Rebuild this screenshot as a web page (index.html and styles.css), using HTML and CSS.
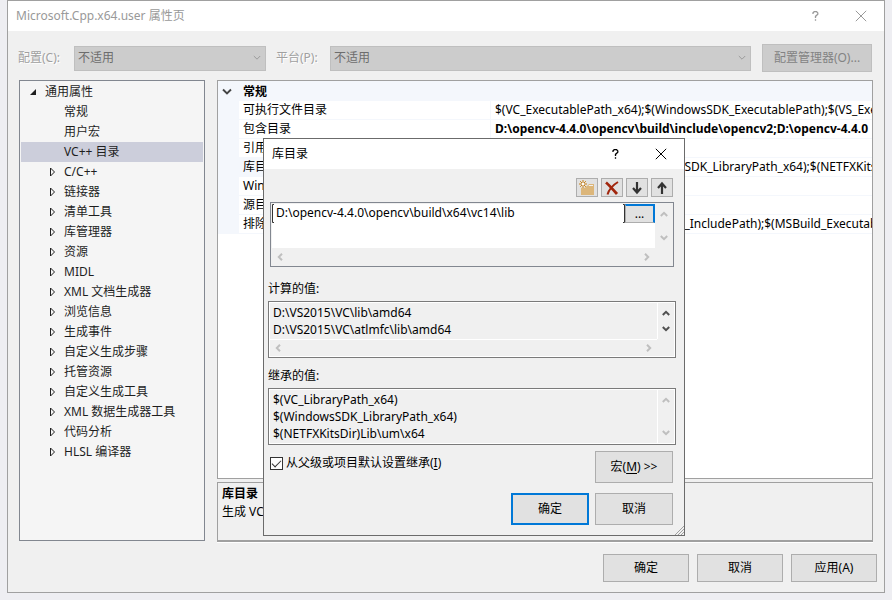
FILE: index.html
```html
<!DOCTYPE html>
<html lang="zh-CN">
<head>
<meta charset="utf-8">
<title>Microsoft.Cpp.x64.user 属性页</title>
<link rel="stylesheet" href="styles.css">
</head>
<body>
<svg class="defs" aria-hidden="true">
  <symbol id="close" viewBox="0 0 12 12"><path d="M.8.8l10.4 10.4M11.200.8L.8 11.200"/></symbol>
  <symbol id="help" viewBox="0 0 7 10"><path d="M1 3V1.800L2.200.700h2.400L5.800 1.900v1.400L3.500 5.400V7M3.500 8.300v1.400"/></symbol>
  <symbol id="up" viewBox="0 0 8 6"><path d="M.8 5L4 1.800 7.200 5"/></symbol>
  <symbol id="down" viewBox="0 0 8 6"><path d="M.8 1L4 4.200 7.200 1"/></symbol>
  <symbol id="left" viewBox="0 0 6 8"><path d="M5 .8L1.800 4 5 7.200"/></symbol>
  <symbol id="right" viewBox="0 0 6 8"><path d="M1 .8L4.200 4 1 7.200"/></symbol>
  <symbol id="twisty" viewBox="0 0 6 10"><path d="M.5 1v8L4.500 5z"/></symbol>
</svg>

<main class="window">
  <header class="titlebar inactive">
    <h1>Microsoft.Cpp.x64.user 属性页</h1>
    <button class="caption" type="button" aria-label="帮助"><svg class="q"><use href="#help"/></svg></button>
    <button class="caption" type="button" aria-label="关闭"><svg class="x"><use href="#close"/></svg></button>
  </header>

  <div class="config">
    <label for="cfg">配置(C):</label>
    <span class="combo first"><select id="cfg" disabled><option>不适用</option></select><svg class="arrow"><use href="#down"/></svg></span>
    <label for="plat">平台(P):</label>
    <span class="combo"><select id="plat" disabled><option>不适用</option></select><svg class="arrow"><use href="#down"/></svg></span>
    <button class="manager" type="button" disabled>配置管理器(O)...</button>
  </div>

  <div class="content">
    <nav class="tree">
      <div class="node root"><svg class="open" viewBox="0 0 8 8"><path d="M7 1v6H1z"/></svg>通用属性</div>
      <ul>
        <li class="node">常规</li>
        <li class="node">用户宏</li>
        <li class="node selected">VC++ 目录</li>
        <li class="node"><svg class="twisty"><use href="#twisty"/></svg>C/C++</li>
        <li class="node"><svg class="twisty"><use href="#twisty"/></svg>链接器</li>
        <li class="node"><svg class="twisty"><use href="#twisty"/></svg>清单工具</li>
        <li class="node"><svg class="twisty"><use href="#twisty"/></svg>库管理器</li>
        <li class="node"><svg class="twisty"><use href="#twisty"/></svg>资源</li>
        <li class="node"><svg class="twisty"><use href="#twisty"/></svg>MIDL</li>
        <li class="node"><svg class="twisty"><use href="#twisty"/></svg>XML 文档生成器</li>
        <li class="node"><svg class="twisty"><use href="#twisty"/></svg>浏览信息</li>
        <li class="node"><svg class="twisty"><use href="#twisty"/></svg>生成事件</li>
        <li class="node"><svg class="twisty"><use href="#twisty"/></svg>自定义生成步骤</li>
        <li class="node"><svg class="twisty"><use href="#twisty"/></svg>托管资源</li>
        <li class="node"><svg class="twisty"><use href="#twisty"/></svg>自定义生成工具</li>
        <li class="node"><svg class="twisty"><use href="#twisty"/></svg>XML 数据生成器工具</li>
        <li class="node"><svg class="twisty"><use href="#twisty"/></svg>代码分析</li>
        <li class="node"><svg class="twisty"><use href="#twisty"/></svg>HLSL 编译器</li>
      </ul>
    </nav>

    <div class="right">
      <div class="grid">
        <table>
          <colgroup><col class="c-gutter"><col class="c-name"><col></colgroup>
          <thead><tr><td class="gutter"><svg class="fold"><use href="#down"/></svg></td><th colspan="2">常规</th></tr></thead>
          <tbody>
            <tr><td class="gutter"></td><td>可执行文件目录</td><td>$(VC_ExecutablePath_x64);$(WindowsSDK_ExecutablePath);$(VS_ExecutablePath)</td></tr>
            <tr><td class="gutter"></td><td>包含目录</td><td><b>D:\opencv-4.4.0\opencv\build\include\opencv2;D:\opencv-4.4.0</b></td></tr>
            <tr><td class="gutter"></td><td>引用目录</td><td></td></tr>
            <tr class="current"><td class="gutter"></td><td>库目录</td><td>$(VC_LibraryPath_x64);$(WindowsSDK_LibraryPath_x64);$(NETFXKitsDir)</td></tr>
            <tr><td class="gutter"></td><td>WinRT 目录</td><td></td></tr>
            <tr><td class="gutter"></td><td>源目录</td><td></td></tr>
            <tr><td class="gutter"></td><td>排除目录</td><td>$(VC_IncludePath);$(WindowsSDK_IncludePath);$(MSBuild_ExecutablePath)</td></tr>
          </tbody>
        </table>
      </div>
      <div class="description"><b>库目录</b><p>生成 VC++ 项目</p></div>
    </div>
  </div>

  <footer class="actions">
    <button class="btn" type="button">确定</button>
    <button class="btn" type="button">取消</button>
    <button class="btn" type="button">应用(A)</button>
  </footer>
</main>

<section class="dialog" role="dialog" aria-labelledby="dlg-title">
  <header class="titlebar">
    <h2 id="dlg-title">库目录</h2>
    <button class="caption" type="button" aria-label="帮助"><svg class="q"><use href="#help"/></svg></button>
    <button class="caption" type="button" aria-label="关闭"><svg class="x"><use href="#close"/></svg></button>
  </header>
  <div class="body">
    <div class="toolbar">
      <button type="button" aria-label="新行"><svg viewBox="0 0 16 16"><path fill="#dcb67a" d="M2 6h6l2-2h5v11H2z"/><path fill="#f0f0f0" d="M10 5h4v1H9.500z"/><circle cx="4" cy="4" r="4" fill="#e8e4dc"/><path stroke="#c27d1a" d="M4 0v8M0 4h8M1.200 1.200l5.600 5.600M6.800 1.200L1.200 6.800"/><circle cx="4" cy="4" r="1.200" fill="#fff"/></svg></button>
      <button type="button" aria-label="删除"><svg viewBox="0 0 16 16"><path fill="none" stroke="#a1260d" stroke-width="2.800" d="M2 2.500c3 2.500 7 7 11 11.500"/><path fill="none" stroke="#a1260d" stroke-width="2" d="M14 2C9 5 5 9.500 3.500 14.500"/></svg></button>
      <button type="button" aria-label="下移"><svg viewBox="0 0 16 16"><path fill="none" stroke="#333" stroke-width="2.200" d="M8 2v10.500M4 8l4 4.500L12 8"/></svg></button>
      <button type="button" aria-label="上移"><svg viewBox="0 0 16 16"><path fill="none" stroke="#333" stroke-width="2.200" d="M8 14V3.500M4 8l4-4.500L12 8"/></svg></button>
    </div>

    <div class="pane editor">
      <div class="edit">
        <svg class="bracket" viewBox="0 0 2 19"><path d="M2 .5H.5v18H2"/></svg>
        <input type="text" aria-label="目录" value="D:\opencv-4.4.0\opencv\build\x64\vc14\lib">
        <svg class="bracket" viewBox="0 0 2 19"><path d="M0 .5h1.500v18H0"/></svg>
        <button class="browse" type="button">...</button>
      </div>
      <div class="vbar"><svg class="v"><use href="#up"/></svg><svg class="v"><use href="#down"/></svg></div>
      <div class="hbar"><svg class="h"><use href="#left"/></svg><svg class="h"><use href="#right"/></svg></div>
    </div>

    <label class="caption-label" for="eval">计算的值:</label>
    <div class="pane values">
      <textarea id="eval" rows="2" readonly>D:\VS2015\VC\lib\amd64
D:\VS2015\VC\atlmfc\lib\amd64</textarea>
      <div class="vbar enabled"><svg class="v"><use href="#up"/></svg><svg class="v"><use href="#down"/></svg></div>
      <div class="hbar"><svg class="h"><use href="#left"/></svg><svg class="h"><use href="#right"/></svg></div>
    </div>

    <label class="caption-label" for="inh">继承的值:</label>
    <div class="pane values">
      <textarea id="inh" rows="3" readonly>$(VC_LibraryPath_x64)
$(WindowsSDK_LibraryPath_x64)
$(NETFXKitsDir)Lib\um\x64</textarea>
      <div class="vbar"><svg class="v"><use href="#up"/></svg><svg class="v"><use href="#down"/></svg></div>
    </div>

    <div class="inherit">
      <label class="check"><input type="checkbox" checked><span>从父级或项目默认设置继承(<u>I</u>)</span></label>
      <button class="btn" type="button"><span>宏(<u>M</u>) &gt;&gt;</span></button>
    </div>
    <div class="confirm">
      <button class="btn default" type="button">确定</button>
      <button class="btn" type="button">取消</button>
    </div>
  </div>
  <svg class="grip" viewBox="0 0 9 9"><path d="M0 9L9 0M3 9l6-6M6 9l3-3"/></svg>
</section>
</body>
</html>
```
FILE: styles.css
```css
* { box-sizing: border-box; }
body {
  margin: 0;
  min-height: 100vh;
  display: flex;
  position: relative;
  background: #eeeef2;
  color: #000;
  font: 12px/18px "Noto Sans", "Noto Sans CJK SC", sans-serif;
}
button, input, select, textarea { font: inherit; color: inherit; margin: 0; border-radius: 0; }
button { padding: 0; display: flex; align-items: center; justify-content: center; }
h1, h2, p, ul { margin: 0; padding: 0; }
.defs { position: absolute; width: 0; height: 0; }
svg { fill: none; stroke: currentColor; flex: none; }

.window {
  flex: 1;
  min-width: 0;
  margin: 0 7px 7px;
  border: 1px solid #a0a0a0;
  background: #f0f0f0;
  display: flex;
  flex-direction: column;
}
.titlebar { display: flex; align-items: center; height: 30px; background: #fff; padding-left: 8px; }
.titlebar h1, .titlebar h2 { flex: 1; font-size: 12px; font-weight: 400; }
.titlebar.inactive { color: #999; }
.caption { width: 46px; height: 30px; border: 0; background: none; }
.caption .x { width: 12px; height: 12px; }
.caption .q { width: 7px; height: 10px; stroke-width: 1.300; }

.config { display: flex; align-items: center; height: 28px; margin: 13px 12px 8px 10px; }
.config label { width: 56px; color: #a0a0a0; text-shadow: 1px 1px #fff; }
.combo { display: grid; align-items: center; flex: 1; height: 25px; }
.combo.first { flex: 0 0 192px; }
.combo + label { width: 64px; padding-left: 10px; }
.combo > * { grid-area: 1 / 1; }
.combo select {
  appearance: none;
  width: 100%;
  height: 25px;
  padding: 0 3px;
  border: 1px solid #bfbfbf;
  background: #ccc;
  color: #6d6d6d;
  opacity: 1;
}
.arrow { width: 8px; height: 6px; justify-self: end; margin-right: 5px; color: #9a9a9a; }
.manager { width: 110px; height: 28px; margin-left: 11px; border: 1px solid #bfbfbf; background: #ccc; color: #838383; }

.content { flex: 1; min-height: 0; display: flex; gap: 12px; padding: 0 11px; }
.tree { width: 186px; border: 1px solid #828790; background: #f5f5f5; padding: 1px; margin-bottom: 1px; color: #1e1e1e; }
.tree ul { list-style: none; }
.node { display: flex; align-items: center; height: 20px; padding-left: 43px; }
.node.root { padding-left: 8px; gap: 8px; }
.node.selected { background: #cccedb; }
.twisty { width: 6px; height: 10px; margin: 0 8px 0 -14px; }
.open { width: 8px; height: 8px; fill: #1e1e1e; stroke: none; }

.right { flex: 1; min-width: 0; display: flex; flex-direction: column; gap: 3px; }
.grid { flex: 1; border: 1px solid #a0a0a0; background: #fff; overflow: hidden; }
table { width: 100%; table-layout: fixed; border-collapse: separate; border-spacing: 0; }
.c-gutter { width: 21px; }
.c-name { width: 252px; }
tr { height: 19px; }
thead tr { height: 20px; background: #f4f7fc; }
td, th { padding: 0 4px; line-height: 18px; white-space: nowrap; overflow: hidden; text-align: left; }
td:last-child { padding-right: 0; }
thead td, thead th { padding-top: 2px; }
tbody td { border-bottom: 1px solid #f4f7fc; }
tbody td:nth-child(2) { border-right: 1px solid #f4f7fc; }
td.gutter { background: #f4f7fc; }
.fold { display: block; width: 10px; height: 8px; stroke-width: 1.500; color: #444; }
.current td:nth-child(2) { background: #f4f7fc; }
.description { height: 60px; border: 1px solid #a0a0a0; border-bottom-width: 2px; box-shadow: 0 1px #fff; padding: 2px 4px; }

.actions { display: flex; justify-content: flex-end; gap: 8px; padding: 12px 7px 10px; }
.btn { width: 78px; height: 32px; border: 1px solid #adadad; background: #e1e1e1; }
.actions .btn { width: 86px; height: 28px; }
.btn.default { border: 2px solid #0078d7; }

.dialog { position: absolute; left: 263px; top: 138px; width: 422px; border: 1px solid #6b6b6b; background: #f0f0f0; }
.body { padding: 9px 8px 10px 4px; }
.toolbar { display: flex; justify-content: flex-end; gap: 3px; padding-right: 3px; }
.toolbar button { width: 22px; height: 19px; border: 1px solid #adadad; background: #e1e1e1; }
.toolbar svg { width: 16px; height: 16px; stroke: none; }
.pane { display: grid; grid-template-columns: 1fr 17px; grid-template-rows: 1fr auto; border: 1px solid #7a7a7a; padding: 1px; }
.editor { height: 65px; margin: 5px 2px 0; border-color: #828790; background: #f0f0f0; }
.edit { display: flex; align-items: flex-start; background: #fff; }
.edit input { flex: 1; min-width: 0; height: 18px; padding: 0 2px; border: 0; outline: 0; background: #fff; }
.bracket { width: 2px; height: 19px; color: #333; }
.browse { width: 30px; height: 19px; border: 1px solid #adadad; background: #e1e1e1; box-shadow: inset 0 0 0 1px #e1e1e1; border-top: 2px solid #0078d7; border-right: 2px solid #0078d7; }
.vbar { display: flex; flex-direction: column; align-items: center; justify-content: space-between; padding: 7px 0; color: #bfbfbf; }
.vbar svg, .hbar svg { stroke-width: 2; }
.v { width: 8px; height: 6px; }
.h { width: 6px; height: 8px; }
.enabled { color: #505050; }
.hbar { display: flex; justify-content: space-between; align-items: center; height: 17px; padding: 0 5px; color: #bfbfbf; }
.caption-label { display: block; margin: 9px 0 3px; }
.editor + .caption-label { margin-top: 13px; }
.values { height: 57px; background: #f0f0f0; outline: 1px solid #fff; outline-offset: -2px; }
.values .vbar { border-left: 1px solid #fff; }
.values .hbar { border-top: 1px solid #fff; }
.values textarea { display: block; width: 100%; padding: 1px 3px; border: 0; outline: 0; resize: none; overflow: hidden; background: none; line-height: 17px; white-space: pre; }
.inherit { display: flex; justify-content: space-between; align-items: flex-start; margin: 6px 3px 10px 2px; }
.check { display: flex; align-items: center; gap: 3px; padding-top: 3px; }
.check input {
  appearance: none;
  width: 13px;
  height: 13px;
  border: 1px solid #333;
  background: #fff;
  display: grid;
  place-items: center;
}
.check input:checked::before { content: ""; width: 8px; height: 4px; border: solid #333; border-width: 0 0 1px 1px; transform: translateY(-1px) rotate(-45deg); }
u { text-underline-offset: 2px; }
.confirm { display: flex; justify-content: flex-end; gap: 6px; margin-right: 3px; }
.grip { position: absolute; right: 0; bottom: 0; width: 9px; height: 9px; color: #a0a0a0; }
```
